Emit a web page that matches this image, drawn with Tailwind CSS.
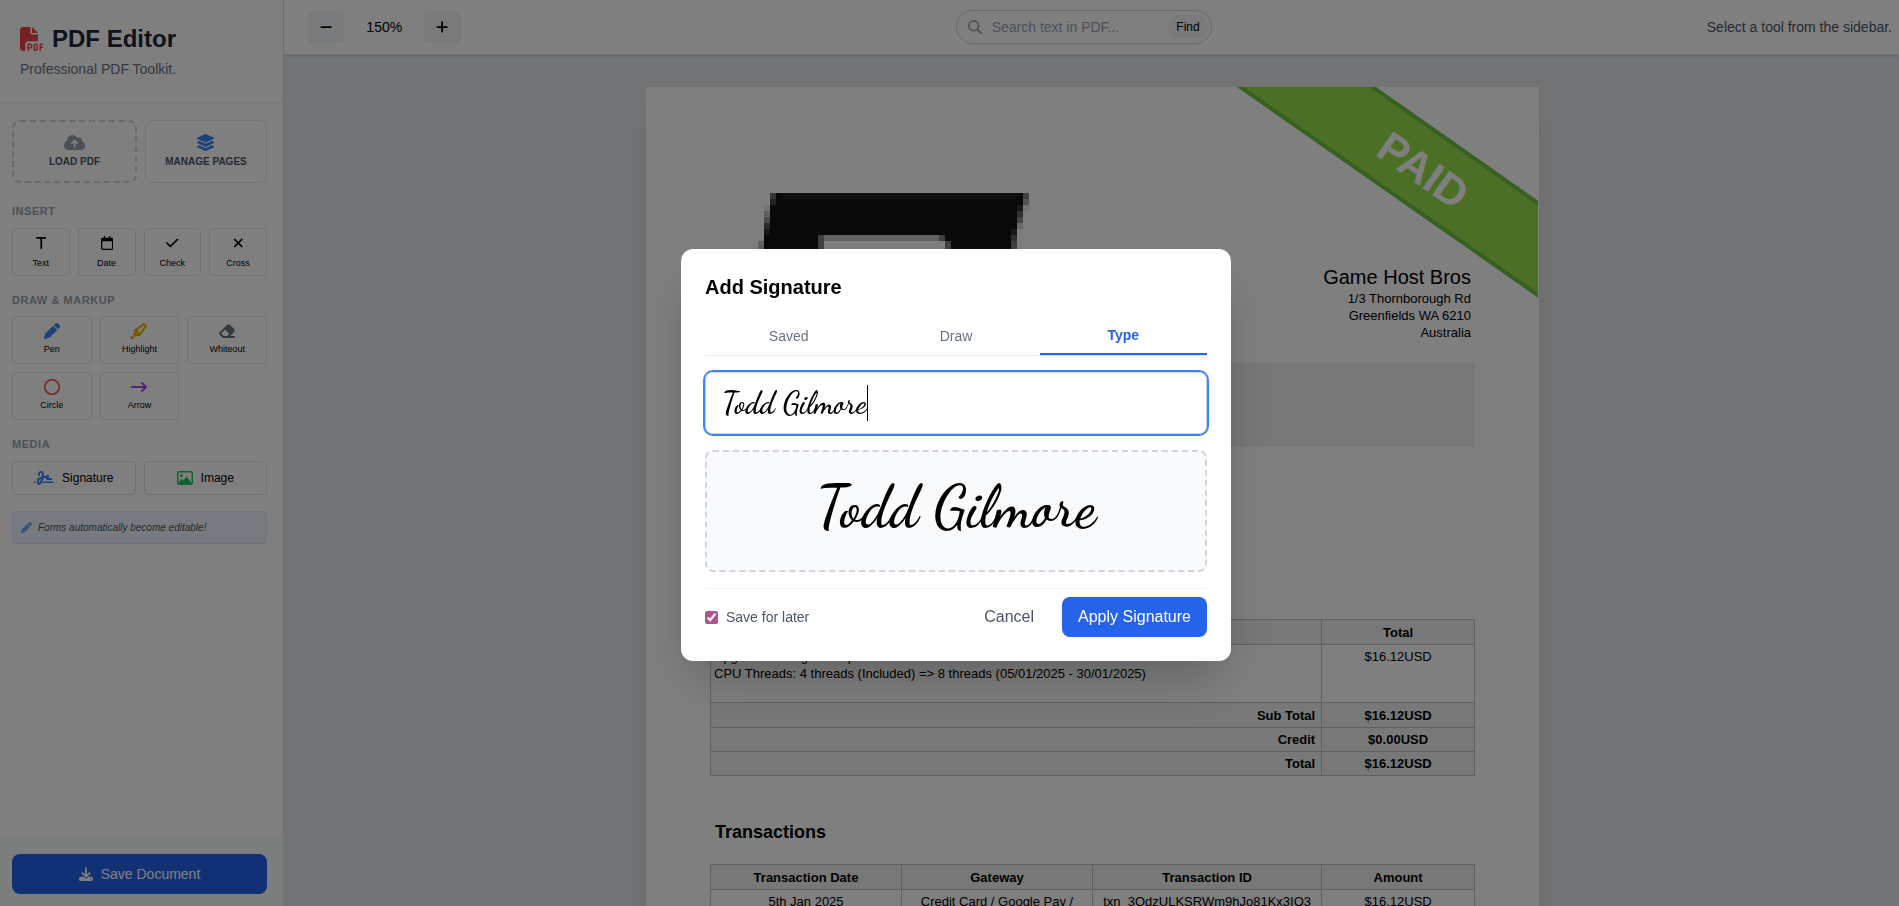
<!DOCTYPE html>
<html lang="en">
<head>
    <meta charset="UTF-8">
    <meta name="viewport" content="width=device-width, initial-scale=1.0">
    <title>PDF Editor</title>
    <script src="https://cdn.jsdelivr.net/npm/@tailwindcss/browser@4"></script>
</head>
<body class="flex h-screen overflow-hidden bg-gray-200 font-['Liberation_Sans',Arial,sans-serif] text-black">

    <!-- Sidebar -->
    <aside class="z-10 flex w-[284px] shrink-0 flex-col border-r border-gray-200 bg-white">
        <header class="border-b border-gray-100 px-5 pt-[23px] pb-6">
            <h1 class="flex items-center gap-2 text-2xl font-bold text-gray-800">
                <svg class="size-6 text-[#ef4444]" viewBox="0 0 512 512" fill="currentColor"><path d="M0 64C0 28.7 28.7 0 64 0L224 0l0 128c0 17.7 14.3 32 32 32l128 0 0 144-208 0c-35.3 0-64 28.7-64 64l0 144-48 0c-35.3 0-64-28.7-64-64L0 64zm384 64l-128 0L256 0 384 128zM176 352l32 0c30.9 0 56 25.1 56 56s-25.1 56-56 56l-16 0 0 32c0 8.8-7.2 16-16 16s-16-7.2-16-16l0-48 0-80c0-8.8 7.2-16 16-16zm32 80c13.3 0 24-10.7 24-24s-10.7-24-24-24l-16 0 0 48 16 0zm96-80l32 0c26.5 0 48 21.5 48 48l0 64c0 26.5-21.5 48-48 48l-32 0c-8.8 0-16-7.2-16-16l0-128c0-8.8 7.2-16 16-16zm32 128c8.8 0 16-7.2 16-16l0-64c0-8.8-7.2-16-16-16l-16 0 0 96 16 0zm80-112c0-8.8 7.2-16 16-16l48 0c8.8 0 16 7.2 16 16s-7.2 16-16 16l-32 0 0 32 32 0c8.8 0 16 7.2 16 16s-7.2 16-16 16l-32 0 0 48c0 8.8-7.2 16-16 16s-16-7.2-16-16l0-64 0-64z"/></svg>
                PDF Editor
            </h1>
            <p class="mt-1 text-sm text-gray-500">Professional PDF Toolkit.</p>
        </header>

        <div class="flex-1 pt-4 pr-4 pl-3">
            <div class="mb-5 grid grid-cols-[125px_1fr] gap-2 text-[10px] leading-[14px] font-bold text-gray-600">
                <button type="button" class="flex h-[63px] flex-col items-center justify-center gap-1 rounded-lg border-2 border-dashed border-gray-300">
                    <svg class="h-[17px] text-gray-400" viewBox="0 0 640 512" fill="currentColor"><path d="M144 480C64.5 480 0 415.5 0 336c0-62.8 40.2-116.2 96.2-135.9c-.1-2.7-.2-5.4-.2-8.1c0-88.4 71.6-160 160-160c59.3 0 111 32.2 138.7 80.2C409.9 102 428.3 96 448 96c53 0 96 43 96 96c0 12.2-2.3 23.8-6.4 34.6C596 238.4 640 290.1 640 352c0 70.7-57.3 128-128 128l-368 0zm79-217c-9.4 9.4-9.4 24.6 0 33.9s24.6 9.4 33.9 0l39-39L296 392c0 13.3 10.7 24 24 24s24-10.7 24-24l0-134.1 39 39c9.4 9.4 24.6 9.4 33.9 0s9.4-24.6 0-33.9l-80-80c-9.4-9.4-24.6-9.4-33.9 0l-80 80z"/></svg>
                    LOAD PDF
                </button>
                <button type="button" class="flex h-[63px] flex-col items-center justify-center gap-1 rounded-lg border border-gray-200">
                    <svg class="h-[17px] text-[#3b82f6]" viewBox="0 0 576 512" fill="currentColor"><path d="M264.5 5.2c14.9-6.9 32.1-6.9 47 0l218.6 101c8.5 3.9 13.9 12.4 13.9 21.8s-5.4 17.9-13.9 21.8l-218.6 101c-14.9 6.9-32.1 6.9-47 0L45.9 149.8C37.4 145.8 32 137.3 32 128s5.4-17.9 13.9-21.8L264.5 5.2zM476.9 209.6l53.2 24.6c8.5 3.9 13.9 12.4 13.9 21.8s-5.4 17.9-13.9 21.8l-218.6 101c-14.9 6.9-32.1 6.9-47 0L45.9 277.8C37.4 273.8 32 265.3 32 256s5.4-17.9 13.9-21.8l53.2-24.6 152 70.2c23.4 10.8 50.4 10.8 73.8 0l152-70.2zm-152 198.2l152-70.2 53.2 24.6c8.5 3.9 13.9 12.4 13.9 21.8s-5.4 17.9-13.9 21.8l-218.6 101c-14.9 6.9-32.1 6.9-47 0L45.9 405.8C37.4 401.8 32 393.3 32 384s5.4-17.9 13.9-21.8l53.2-24.6 152 70.2c23.4 10.8 50.4 10.8 73.8 0z"/></svg>
                    MANAGE PAGES
                </button>
            </div>

            <section class="mb-4">
                <h2 class="mb-2 text-[11px] leading-normal font-bold tracking-wider text-gray-400">INSERT</h2>
                <div class="grid grid-cols-4 gap-2 text-[9px]">
                    <button type="button" class="flex h-12 flex-col items-center rounded border border-gray-200 pt-[7px]">
                        <svg class="mb-[7px] h-3.5" viewBox="0 0 384 512"><path d="M32 32C14.3 32 0 46.3 0 64S14.3 96 32 96l128 0 0 352c0 17.7 14.3 32 32 32s32-14.3 32-32l0-352 128 0c17.7 0 32-14.3 32-32s-14.3-32-32-32L192 32 32 32z"/></svg>
                        Text
                    </button>
                    <button type="button" class="flex h-12 flex-col items-center rounded border border-gray-200 pt-[7px]">
                        <svg class="mb-[7px] h-3.5" viewBox="0 0 448 512"><path d="M152 24c0-13.3-10.7-24-24-24s-24 10.7-24 24l0 40L64 64C28.7 64 0 92.7 0 128l0 16 0 48L0 448c0 35.3 28.7 64 64 64l320 0c35.3 0 64-28.7 64-64l0-256 0-48 0-16c0-35.3-28.7-64-64-64l-40 0 0-40c0-13.3-10.7-24-24-24s-24 10.7-24 24l0 40L152 64l0-40zM48 192l352 0 0 256c0 8.8-7.2 16-16 16L64 464c-8.8 0-16-7.2-16-16l0-256z"/></svg>
                        Date
                    </button>
                    <button type="button" class="flex h-12 flex-col items-center rounded border border-gray-200 pt-[7px]">
                        <svg class="mb-[7px] h-3.5" viewBox="0 0 448 512"><path d="M438.6 105.4c12.5 12.5 12.5 32.8 0 45.3l-256 256c-12.5 12.5-32.8 12.5-45.3 0l-128-128c-12.5-12.5-12.5-32.8 0-45.3s32.8-12.5 45.3 0L160 338.7 393.4 105.4c12.5-12.5 32.8-12.5 45.3 0z"/></svg>
                        Check
                    </button>
                    <button type="button" class="flex h-12 flex-col items-center rounded border border-gray-200 pt-[7px]">
                        <svg class="mb-[7px] h-3.5" viewBox="0 0 384 512"><path d="M342.6 150.6c12.5-12.5 12.5-32.8 0-45.3s-32.8-12.5-45.3 0L192 210.7 86.6 105.4c-12.5-12.5-32.8-12.5-45.3 0s-12.5 32.8 0 45.3L146.7 256 41.4 361.4c-12.5 12.5-12.5 32.8 0 45.3s32.8 12.5 45.3 0L192 301.3 297.4 406.6c12.5 12.5 32.8 12.5 45.3 0s12.5-32.8 0-45.3L237.3 256 342.6 150.6z"/></svg>
                        Cross
                    </button>
                </div>
            </section>

            <section class="mb-4">
                <h2 class="mb-2 text-[11px] leading-normal font-bold tracking-wider text-gray-400">DRAW &amp; MARKUP</h2>
                <div class="grid grid-cols-3 gap-2 text-[9px]">
                    <button type="button" class="flex h-12 flex-col items-center rounded border border-gray-200 pt-1.5">
                        <svg class="mb-1 h-4 text-[#3b82f6]" viewBox="0 0 512 512" fill="currentColor"><path d="M362.7 19.3L314.3 67.7 444.3 197.7l48.4-48.4c25-25 25-65.5 0-90.5L453.3 19.3c-25-25-65.5-25-90.5 0zm-71 71L58.6 323.5c-10.4 10.4-18 23.3-22.2 37.4L1 481.2C-1.5 489.7 .8 498.8 7 505s15.3 8.5 23.7 6.1l120.3-35.4c14.1-4.2 27-11.8 37.4-22.2L421.7 220.3 291.7 90.3z"/></svg>
                        Pen
                    </button>
                    <button type="button" class="flex h-12 flex-col items-center rounded border border-gray-200 pt-1.5">
                        <svg class="mb-1 h-4 text-[#eab308]" viewBox="0 0 576 512" fill="currentColor"><path d="M315 315l158.4-215L444.1 70.6 229 229 315 315zm-187 5s0 0 0 0l0-71.7c0-15.3 7.2-29.6 19.5-38.6L420.6 8.4C428 2.9 437 0 446.2 0c11.4 0 22.4 4.5 30.5 12.6l54.8 54.8c8.1 8.1 12.6 19 12.6 30.5c0 9.2-2.9 18.2-8.4 25.6L334.4 396.5c-9 12.3-23.4 19.5-38.6 19.5L224 416l-25.4 25.4c-12.5 12.5-32.8 12.5-45.3 0l-50.7-50.7c-12.5-12.5-12.5-32.8 0-45.3L128 320zM7 466.3l63-63 70.6 70.6-31 31c-4.5 4.5-10.6 7-17 7L24 512c-13.3 0-24-10.7-24-24l0-4.7c0-6.4 2.5-12.5 7-17z"/></svg>
                        Highlight
                    </button>
                    <button type="button" class="flex h-12 flex-col items-center rounded border border-gray-200 pt-1.5">
                        <svg class="mb-1 h-4 text-gray-500" viewBox="0 0 576 512" fill="currentColor"><path d="M290.7 57.4L57.4 290.7c-25 25-25 65.5 0 90.5l80 80c12 12 28.3 18.7 45.3 18.7L288 480l9.4 0L512 480c17.7 0 32-14.3 32-32s-14.3-32-32-32l-124.1 0L518.6 285.3c25-25 25-65.5 0-90.5L381.3 57.4c-25-25-65.5-25-90.5 0zM297.4 416l-9.4 0-105.4 0-80-80L227.3 211.3 364.7 348.7 297.4 416z"/></svg>
                        Whiteout
                    </button>
                    <button type="button" class="flex h-12 flex-col items-center rounded border border-gray-200 pt-1.5">
                        <svg class="mb-1 h-4 text-[#ef4444]" viewBox="0 0 512 512" fill="none" stroke="currentColor" stroke-width="48"><circle cx="256" cy="256" r="232"/></svg>
                        Circle
                    </button>
                    <button type="button" class="flex h-12 flex-col items-center rounded border border-gray-200 pt-1.5">
                        <svg class="mb-1 h-4 text-[#a14af0]" viewBox="0 0 512 512" fill="currentColor"><path d="M502.6 278.6c12.5-12.5 12.5-32.8 0-45.3l-128-128c-12.5-12.5-32.8-12.5-45.3 0s-12.5 32.8 0 45.3L402.7 224 32 224c-17.7 0-32 14.3-32 32s14.3 32 32 32l370.7 0-73.4 73.4c-12.5 12.5-12.5 32.8 0 45.3s32.8 12.5 45.3 0l128-128z"/></svg>
                        Arrow
                    </button>
                </div>
            </section>

            <section class="mb-4">
                <h2 class="mb-2 text-[11px] leading-normal font-bold tracking-wider text-gray-400">MEDIA</h2>
                <div class="grid grid-cols-2 gap-2 text-xs">
                    <button type="button" class="flex h-[34px] items-center justify-center gap-2 rounded border border-gray-200">
                        <svg class="h-4 text-[#3b82f6]" viewBox="0 0 640 512" fill="currentColor"><path d="M192 128c0-17.7 14.3-32 32-32s32 14.3 32 32l0 7.8c0 27.7-2.4 55.3-7.1 82.5l-84.4 25.3c-40.6 12.2-68.4 49.6-68.4 92l0 71.9c0 40 32.5 72.5 72.5 72.5c26 0 50-13.9 62.9-36.5l13.9-24.3c26.8-47 46.5-97.7 58.4-150.5l94.4-28.3-12.5 37.5c-3.3 9.8-1.6 20.5 4.4 28.8s15.7 13.3 26 13.3l128 0c17.7 0 32-14.3 32-32s-14.3-32-32-32l-83.6 0 18-53.9c3.8-11.3 .9-23.8-7.4-32.4s-20.7-11.8-32.2-8.4L316.4 198.1c2.4-20.7 3.6-41.4 3.6-62.3l0-7.8c0-53-43-96-96-96s-96 43-96 96l0 32c0 17.7 14.3 32 32 32s32-14.3 32-32l0-32zm-9.2 177l49-14.7c-10.4 33.8-24.5 66.4-42.1 97.2l-13.9 24.3c-1.5 2.6-4.3 4.3-7.4 4.3c-4.7 0-8.5-3.8-8.5-8.5l0-71.9c0-14.1 9.3-26.6 22.8-30.7zM24 368c-13.3 0-24 10.7-24 24s10.7 24 24 24l40.3 0c-.2-2.8-.3-5.6-.3-8.5L64 368l-40 0zm592 48c13.3 0 24-10.7 24-24s-10.7-24-24-24l-310.1 0c-6.7 16.3-14.2 32.3-22.3 48L616 416z"/></svg>
                        Signature
                    </button>
                    <button type="button" class="flex h-[34px] items-center justify-center gap-2 rounded border border-gray-200">
                        <svg class="h-4 text-[#22c55e]" viewBox="0 0 512 512" fill="currentColor"><path d="M448 80c8.8 0 16 7.2 16 16l0 319.8-5-6.5-136-176c-4.5-5.9-11.6-9.3-19-9.3s-14.4 3.4-19 9.3L202 340.7l-30.5-42.7C167 291.7 159.8 288 152 288s-15 3.7-19.5 10.1l-80 112L48 416.3l0-.3L48 96c0-8.8 7.2-16 16-16l384 0zM64 32C28.7 32 0 60.7 0 96L0 416c0 35.3 28.7 64 64 64l384 0c35.3 0 64-28.7 64-64l0-320c0-35.3-28.7-64-64-64L64 32zm80 192a48 48 0 1 0 0-96 48 48 0 1 0 0 96z"/></svg>
                        Image
                    </button>
                </div>
            </section>

            <p class="flex h-[33px] items-center gap-1.5 rounded border border-[#dbeafe] bg-[#eff6ff] px-2 text-[10px] text-gray-600 italic">
                <svg class="size-[11px] text-[#60a5fa]" viewBox="0 0 512 512" fill="currentColor"><path d="M362.7 19.3L314.3 67.7 444.3 197.7l48.4-48.4c25-25 25-65.5 0-90.5L453.3 19.3c-25-25-65.5-25-90.5 0zm-71 71L58.6 323.5c-10.4 10.4-18 23.3-22.2 37.4L1 481.2C-1.5 489.7 .8 498.8 7 505s15.3 8.5 23.7 6.1l120.3-35.4c14.1-4.2 27-11.8 37.4-22.2L421.7 220.3 291.7 90.3z"/></svg>
                Forms automatically become editable!
            </p>
        </div>

        <footer class="border-t border-gray-100 bg-gray-50 pt-4 pr-4 pb-3 pl-3">
            <button type="button" class="flex h-10 w-full items-center justify-center gap-2 rounded-lg bg-[#2563eb] text-sm text-white">
                <svg class="h-3.5" viewBox="0 0 512 512" fill="currentColor"><path d="M288 32c0-17.7-14.3-32-32-32s-32 14.3-32 32l0 242.7-73.4-73.4c-12.5-12.5-32.8-12.5-45.3 0s-12.5 32.8 0 45.3l128 128c12.5 12.5 32.8 12.5 45.3 0l128-128c12.5-12.5 12.5-32.8 0-45.3s-32.8-12.5-45.3 0L288 274.7 288 32zM64 352c-35.3 0-64 28.7-64 64l0 32c0 35.3 28.7 64 64 64l384 0c35.3 0 64-28.7 64-64l0-32c0-35.3-28.7-64-64-64l-101.5 0-45.3 45.3c-25 25-65.5 25-90.5 0L165.5 352 64 352zm368 56a24 24 0 1 1 0 48 24 24 0 1 1 0-48z"/></svg>
                Save Document
            </button>
        </footer>
    </aside>

    <main class="flex min-w-0 flex-1 flex-col">
        <!-- Toolbar -->
        <div class="z-10 flex h-[55px] shrink-0 items-center justify-between border-b border-gray-200 bg-white pr-[7px] pl-6 text-sm shadow-sm">
            <div class="flex items-center gap-4">
                <button type="button" aria-label="Zoom out" class="flex h-8 items-center rounded bg-gray-100 px-3">
                    <svg class="h-3.5" viewBox="0 0 448 512"><path d="M432 256c0 17.7-14.3 32-32 32L48 288c-17.7 0-32-14.3-32-32s14.3-32 32-32l352 0c17.7 0 32 14.3 32 32z"/></svg>
                </button>
                <span class="w-12 text-center">150%</span>
                <button type="button" aria-label="Zoom in" class="flex h-8 items-center rounded bg-gray-100 px-3">
                    <svg class="h-3.5" viewBox="0 0 448 512"><path d="M256 80c0-17.7-14.3-32-32-32s-32 14.3-32 32l0 144L48 224c-17.7 0-32 14.3-32 32s14.3 32 32 32l144 0 0 144c0 17.7 14.3 32 32 32s32-14.3 32-32l0-144 144 0c17.7 0 32-14.3 32-32s-14.3-32-32-32l-144 0 0-144z"/></svg>
                </button>
            </div>
            <div class="flex h-[34px] w-64 items-center rounded-full border border-gray-300 pr-[3px] pl-[11px]">
                <svg class="h-3.5 shrink-0 text-gray-400" viewBox="0 0 512 512" fill="currentColor"><path d="M416 208c0 45.9-14.9 88.3-40 122.7L502.6 457.4c12.5 12.5 12.5 32.8 0 45.3s-32.8 12.5-45.3 0L330.7 376c-34.4 25.2-76.8 40-122.7 40C93.1 416 0 322.9 0 208S93.1 0 208 0S416 93.1 416 208zM208 352a144 144 0 1 0 0-288 144 144 0 1 0 0 288z"/></svg>
                <input type="text" aria-label="Search text in PDF" placeholder="Search text in PDF..." class="ml-2.5 min-w-0 flex-1 outline-none placeholder:text-gray-400">
                <button type="button" class="h-6 rounded-full bg-gray-100 px-2 text-xs">Find</button>
            </div>
            <span class="text-gray-600">Select a tool from the sidebar.</span>
        </div>

        <!-- Document view -->
        <div class="min-h-0 flex-1 overflow-hidden pt-8 pl-0.5">
            <article class="relative mx-auto h-[1263px] w-[893px] bg-white px-16 text-[13px] leading-[17px] shadow-xl">
                <svg class="absolute top-0 left-0" width="892" height="230" viewBox="0 0 892 230">
                    <!-- ribbon -->
                    <path fill="#97df4a" d="M592 0H728L892 115V210Z"/>
                    <path fill="none" stroke="#6ec046" stroke-width="4" d="M588 -4.5L896 211M719.5 -5L896 119"/>
                    <text transform="translate(728 67) rotate(35)" font-size="43" font-weight="700" fill="#fff">PAID</text>
                    <!-- logo -->
                    <g shape-rendering="crispEdges">
                        <path fill="#131313" d="M130 106H377V118H371V142H365V230H305V154H299V148H178V154H172V230H118V142H124V118H130Z"/>
                        <path fill="#1f1f1f" d="M136 106H371V112H136Z"/>
                        <path fill="#6c6c6c" d="M124 106h6v6h-6z"/>
                        <path fill="#404040" d="M124 112h6v6h-6z"/>
                        <path fill="#808080" d="M377 106h6v6h-6z"/>
                        <path fill="#a8a8a8" d="M377 112h6v6h-6z"/>
                        <path fill="#eaeaea" d="M118 118h6v6h-6zM377 118h6v6h-6z"/>
                        <path fill="#c0c0c0" d="M118 124h6v6h-6z"/>
                        <path fill="#909090" d="M118 130h6v6h-6z"/>
                        <path fill="#585858" d="M118 136h6v6h-6z"/>
                        <path fill="#303030" d="M118 142h6v6h-6zM371 118h6v6h-6zM365 142h6v6h-6z"/>
                        <path fill="#c0c0c0" d="M112 154h6v12h-6z"/>
                        <path fill="#606060" d="M371 124h6v6h-6zM365 148h6v6h-6z"/>
                        <path fill="#8c8c8c" d="M371 130h6v6h-6z"/>
                        <path fill="#d0d0d0" d="M371 136h6v6h-6z"/>
                        <path fill="#fff" d="M178 154H299V230H178Z"/>
                        <path fill="#c4c4c4" d="M178 148H293V154H178Z"/>
                        <path fill="#808080" d="M172 148h6v18h-6zM293 148h6v6h-6zM299 154h6v12h-6zM365 154h6v12h-6z"/>
                    </g>
                </svg>

                <header class="pt-[178px] pr-1 text-right">
                    <p class="text-[20px] leading-[25px]">Game Host Bros</p>
                    <p>1/3 Thornborough Rd</p>
                    <p>Greenfields WA 6210</p>
                    <p>Australia</p>
                </header>

                <div class="mt-[21px] h-[85px] bg-[#f0f0f0]"></div>

                <table class="mt-[172px] w-full table-fixed border-collapse">
                    <thead>
                        <tr class="bg-[#f0f0f0]">
                            <th class="h-[25px] w-4/5 border border-[#c0c0c0]">Description</th>
                            <th class="w-1/5 border border-[#c0c0c0]">Total</th>
                        </tr>
                    </thead>
                    <tbody>
                        <tr class="align-top">
                            <td class="h-[58px] border border-[#c0c0c0] px-[3px] pt-[3px]">Upgrade/Downgrade Options<br>CPU Threads: 4 threads (Included) =&gt; 8 threads (05/01/2025 - 30/01/2025)</td>
                            <td class="border border-[#c0c0c0] pt-[3px] text-center">$16.12USD</td>
                        </tr>
                        <tr class="bg-[#f0f0f0] font-bold">
                            <td class="h-[25px] border border-[#c0c0c0] px-1.5 text-right">Sub Total</td>
                            <td class="border border-[#c0c0c0] text-center">$16.12USD</td>
                        </tr>
                        <tr class="bg-[#f0f0f0] font-bold">
                            <td class="h-6 border border-[#c0c0c0] px-1.5 text-right">Credit</td>
                            <td class="border border-[#c0c0c0] text-center">$0.00USD</td>
                        </tr>
                        <tr class="bg-[#f0f0f0] font-bold">
                            <td class="h-6 border border-[#c0c0c0] px-1.5 text-right">Total</td>
                            <td class="border border-[#c0c0c0] text-center">$16.12USD</td>
                        </tr>
                    </tbody>
                </table>

                <h2 class="mt-11 mb-5 pl-[5px] text-[18px] leading-6 font-bold">Transactions</h2>

                <table class="w-full table-fixed border-collapse text-center">
                    <thead>
                        <tr class="bg-[#f0f0f0]">
                            <th class="h-[25px] w-[25%] border border-[#c0c0c0]">Transaction Date</th>
                            <th class="w-[25%] border border-[#c0c0c0]">Gateway</th>
                            <th class="w-[30%] border border-[#c0c0c0]">Transaction ID</th>
                            <th class="w-[20%] border border-[#c0c0c0]">Amount</th>
                        </tr>
                    </thead>
                    <tbody>
                        <tr class="align-top">
                            <td class="h-[60px] border border-[#c0c0c0] pt-[3px]">5th Jan 2025</td>
                            <td class="border border-[#c0c0c0] pt-[3px]">Credit Card / Google Pay /</td>
                            <td class="border border-[#c0c0c0] pt-[3px] whitespace-nowrap">txn_3QdzULKSRWm9hJo81Kx3IO3</td>
                            <td class="border border-[#c0c0c0] pt-[3px]">$16.12USD</td>
                        </tr>
                    </tbody>
                </table>
            </article>
        </div>
    </main>

    <!-- Signature dialog -->
    <div class="fixed inset-0 z-50 flex items-center justify-center bg-black/50 pt-1 pl-[13px]">
        <div role="dialog" aria-labelledby="sig-title" class="w-[550px] rounded-xl bg-white p-6 shadow-2xl">
            <h2 id="sig-title" class="mb-4 text-xl font-bold">Add Signature</h2>

            <div role="tablist" class="mb-4 grid grid-cols-3 border-b border-gray-200 text-sm">
                <button type="button" role="tab" class="py-2 text-gray-500">Saved</button>
                <button type="button" role="tab" class="py-2 text-gray-500">Draw</button>
                <button type="button" role="tab" aria-selected="true" class="border-b-2 border-[#2563eb] py-2 font-bold text-[#2563eb]">Type</button>
            </div>

            <div class="relative mb-4">
                <input type="text" aria-label="Your name" value="Todd Gilmore" class="block h-[62px] w-full rounded-lg border border-gray-300 px-4 font-['Dancing_Script','Liberation_Serif',cursive] text-3xl font-semibold ring-2 ring-[#3b82f6] outline-none">
                <!-- caret -->
                <span class="absolute top-[13px] left-[162px] h-9 w-px bg-black"></span>
            </div>

            <div class="mb-4 flex h-[122px] items-center justify-center rounded-lg border-2 border-dashed border-gray-300 bg-gray-50 pb-1.5 font-['Dancing_Script','Liberation_Serif',cursive] text-[58px] leading-none font-semibold">Todd Gilmore</div>

            <div class="flex items-center justify-between border-t border-gray-100 pt-2">
                <label class="flex items-center gap-2 text-sm text-gray-600">
                    <input type="checkbox" checked class="size-[13px] accent-[#b5508f]">
                    Save for later
                </label>
                <div class="flex gap-3">
                    <button type="button" class="px-4 py-2 text-gray-600">Cancel</button>
                    <button type="button" class="rounded-lg bg-[#2563eb] px-4 py-2 text-white">Apply Signature</button>
                </div>
            </div>
        </div>
    </div>
</body>
</html>
